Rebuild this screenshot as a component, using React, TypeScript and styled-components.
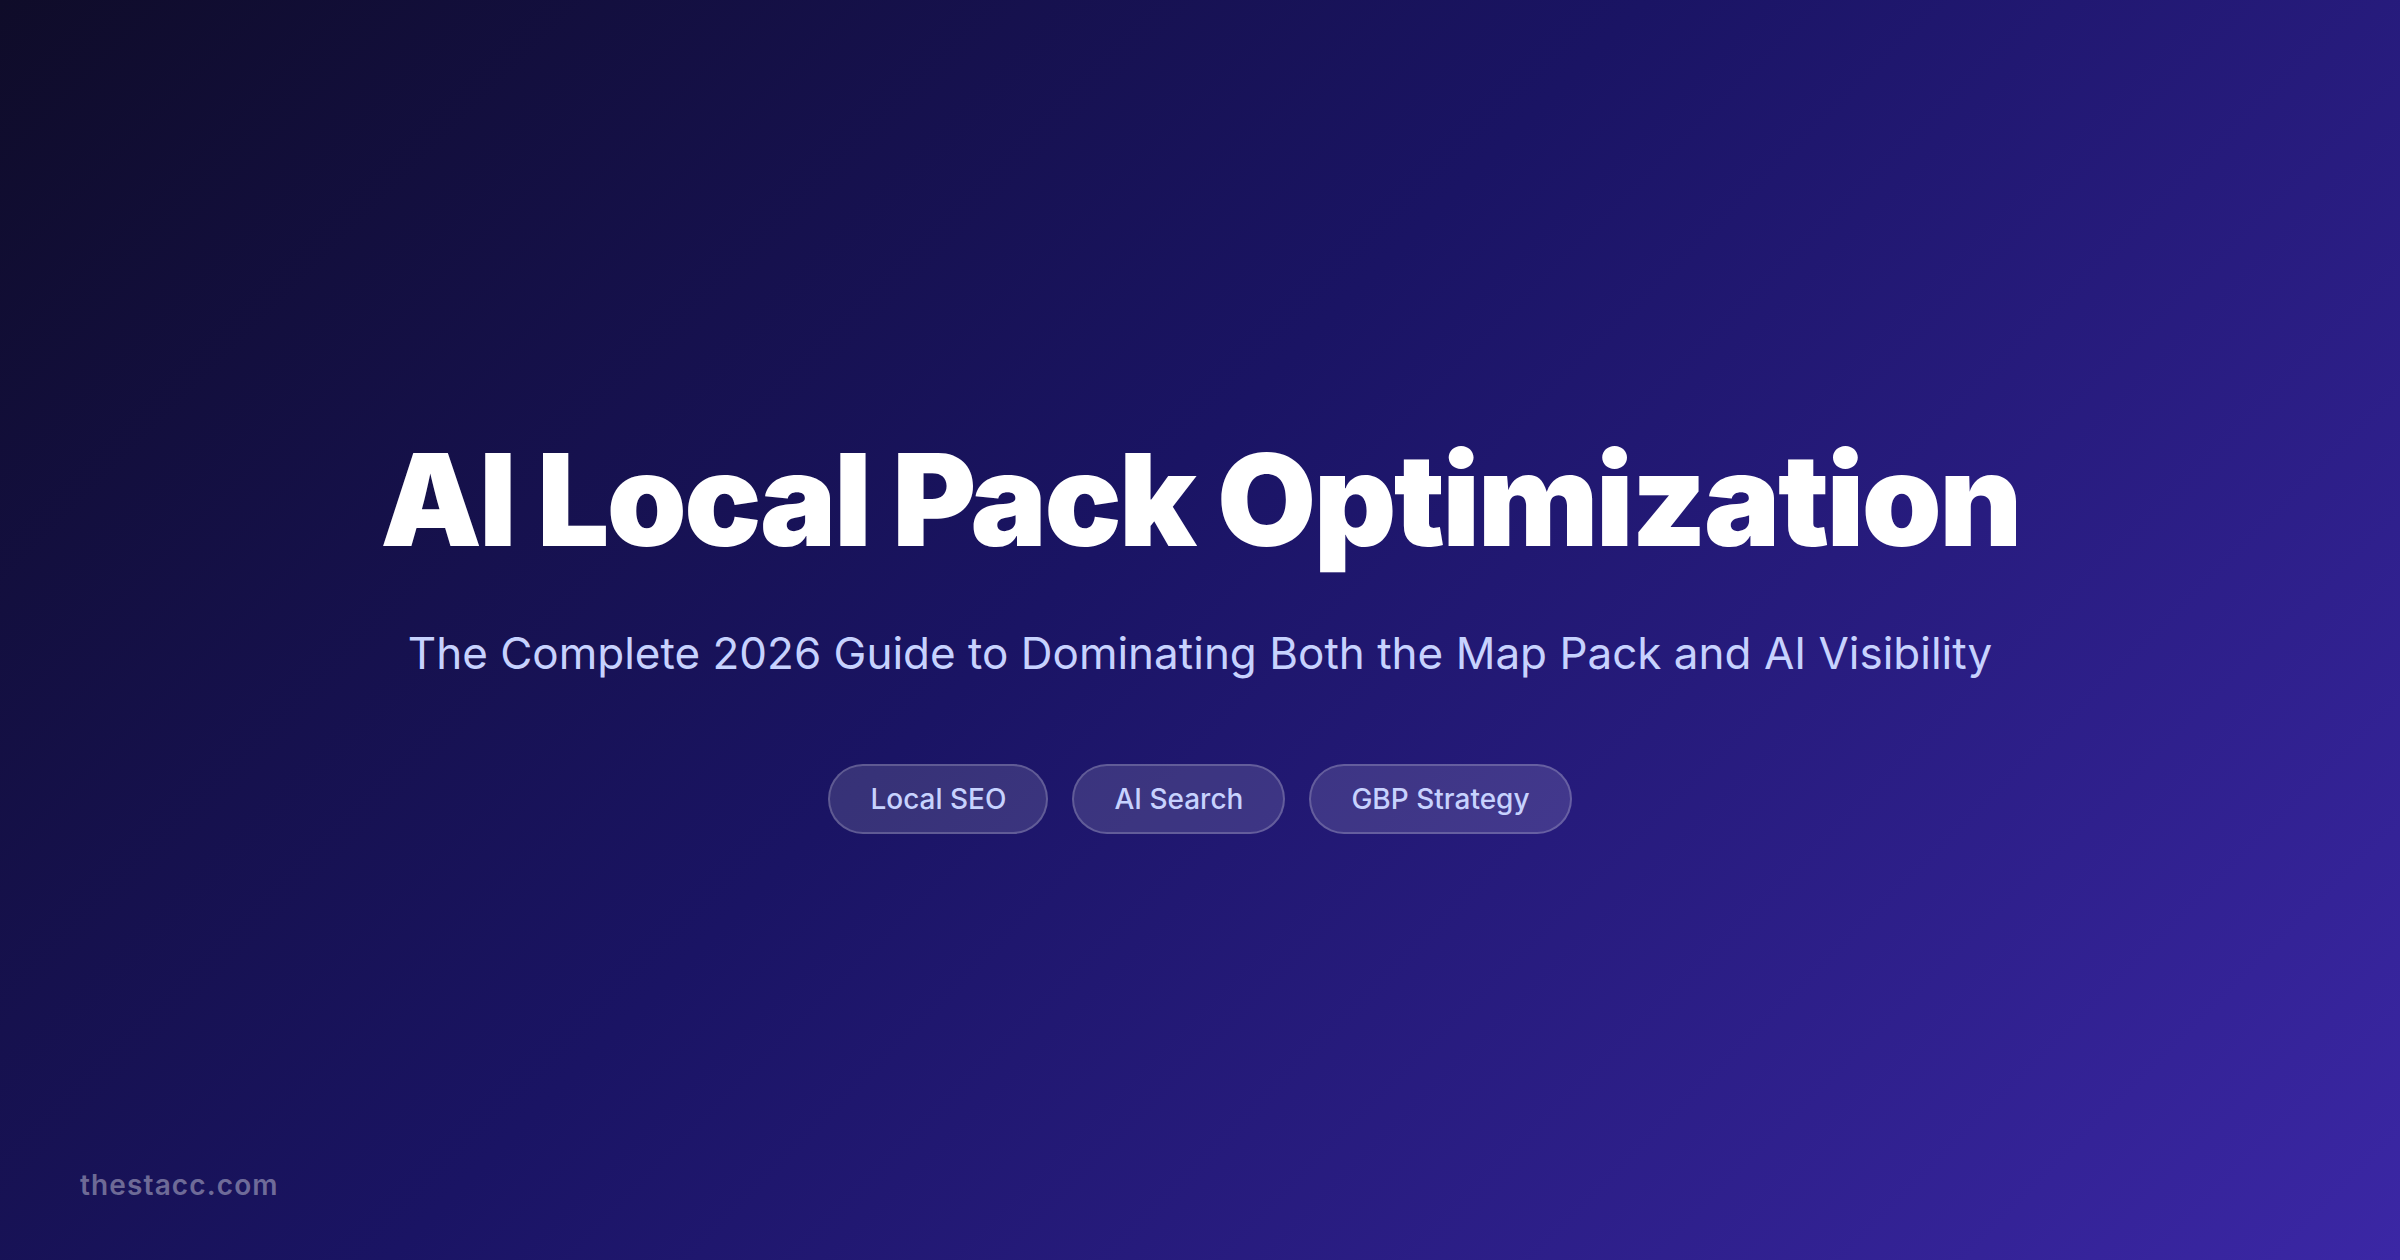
import React from "react";
import styled, { createGlobalStyle } from "styled-components";

const Global = createGlobalStyle`
  html, body { margin: 0; padding: 0; width: 2400px; height: 1260px; overflow: hidden; }
  #root { width: 2400px; height: 1260px; }
`;

const Page = styled.div`
  box-sizing: border-box;
  width: 2400px;
  height: 1260px;
  display: grid;
  grid-template-rows: 1fr auto 1fr;
  justify-items: center;
  background: linear-gradient(135deg, #0f0c29 0%, #1a1464 45%, #3b27a5 100%);
  font-family: Inter, "Liberation Sans", sans-serif;
`;

const Hero = styled.main`
  grid-row: 2;
  display: flex;
  flex-direction: column;
  align-items: center;
  padding-top: 4px;
`;

const Title = styled.h1`
  margin: 0;
  font-size: 128px;
  line-height: 1.1;
  font-weight: 900;
  letter-spacing: -0.02em;
  color: #ffffff;
  white-space: nowrap;
`;

const Subtitle = styled.p`
  margin: 52px 0 0;
  font-size: 44px;
  line-height: 1.4;
  font-weight: 400;
  color: #c7d2fe;
  white-space: nowrap;
`;

const Tags = styled.div`
  display: flex;
  gap: 24px;
  margin-top: 80px;
`;

const Tag = styled.span`
  box-sizing: border-box;
  height: 70px;
  padding: 0 40px;
  display: flex;
  align-items: center;
  border-radius: 36px;
  border: 2px solid rgba(255, 255, 255, 0.2);
  background: rgba(255, 255, 255, 0.13);
  color: #c7d2fe;
  font-size: 28px;
  font-weight: 500;
`;

const Footer = styled.footer`
  grid-row: 3;
  justify-self: start;
  align-self: end;
  padding: 0 0 58px 80px;
  font-size: 28px;
  font-weight: 600;
  letter-spacing: 0.04em;
  color: rgba(255, 255, 255, 0.38);
`;

export default function App() {
  return (
    <Page>
      <Global />
      <Hero>
        <Title>AI Local Pack Optimization</Title>
        <Subtitle>The Complete 2026 Guide to Dominating Both the Map Pack and AI Visibility</Subtitle>
        <Tags>
          <Tag>Local SEO</Tag>
          <Tag>AI Search</Tag>
          <Tag>GBP Strategy</Tag>
        </Tags>
      </Hero>
      <Footer>thestacc.com</Footer>
    </Page>
  );
}
